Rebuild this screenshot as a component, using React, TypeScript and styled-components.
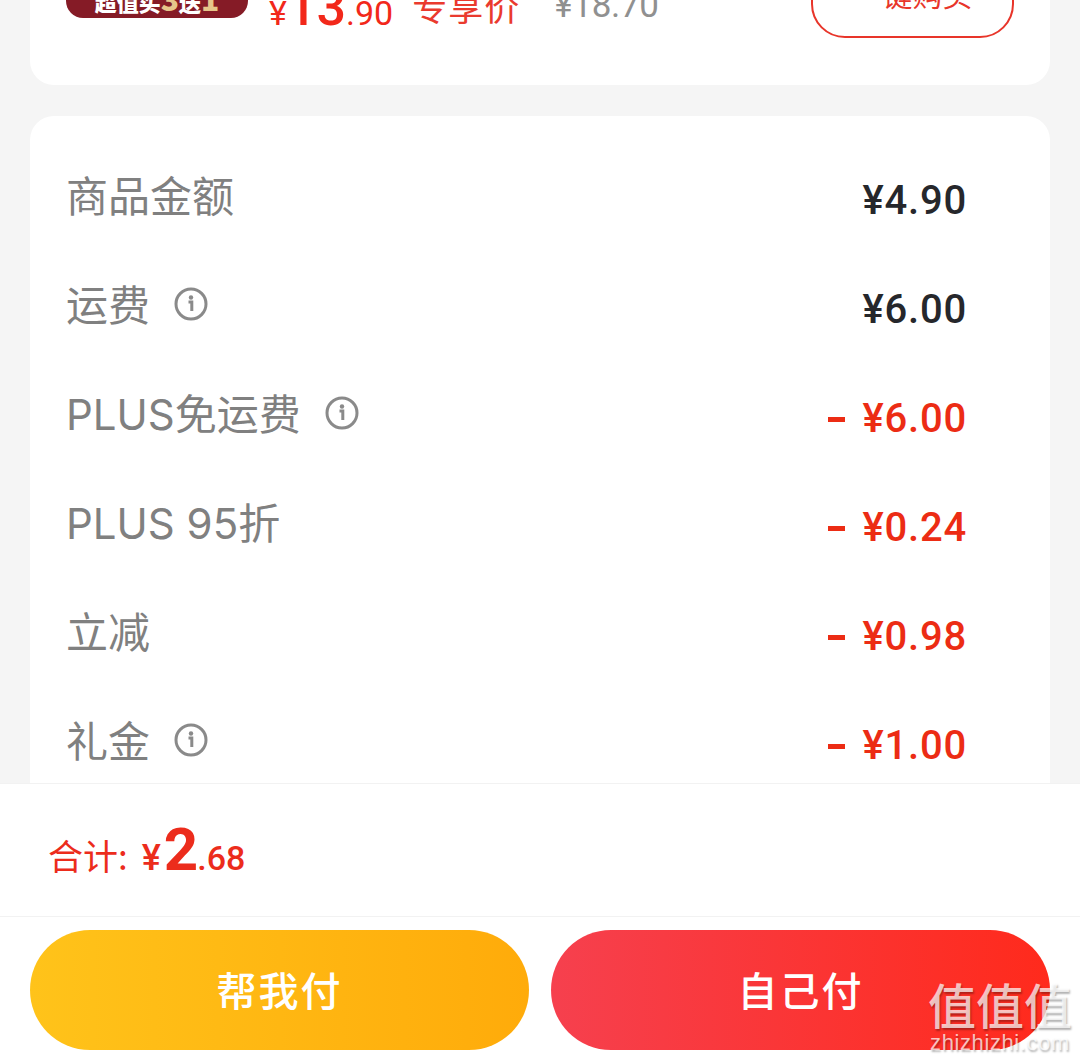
import React from "react";
import styled, { createGlobalStyle } from "styled-components";

const cjk = `"Noto Sans CJK SC", "Noto Sans", sans-serif`;
const num = `Roboto, "Noto Sans CJK SC", sans-serif`;

const Global = createGlobalStyle`
  html, body { margin: 0; padding: 0; background: #f5f5f5; }
  * { box-sizing: border-box; }
`;

const Page = styled.div`
  position: relative;
  width: 1080px;
  height: 1062px;
  display: flex;
  flex-direction: column;
  overflow: hidden;
  background: #f5f5f5;
  font-family: ${cjk};
`;

const Scroll = styled.div`
  flex: 1;
  min-height: 0;
  overflow: hidden;
  padding: 0 30px;
  display: flex;
  flex-direction: column;
  gap: 31px;
`;

const OfferCard = styled.section`
  flex: none;
  height: 85px;
  background: #fff;
  border-radius: 0 0 24px 24px;
  padding: 0 36px 47px 36px;
  display: flex;
  align-items: flex-end;
  overflow: hidden;
`;

const Banner = styled.div`
  flex: none;
  width: 182px;
  height: 50px;
  margin-bottom: 20px;
  border-radius: 0 0 17px 17px;
  background: #851b26;
  color: #fff;
  font-size: 22px;
  font-weight: 900;
  line-height: 60px;
  text-align: center;
  white-space: nowrap;
`;

const GoldNum = styled.span`
  color: #e6c58a;
  font-size: 30px;
`;

const Price = styled.div`
  flex: none;
  margin: 0 0 -5px 21px;
  color: #f2281a;
  font-family: ${num};
  font-size: 34px;
  line-height: 60px;
  white-space: nowrap;
`;

const PriceBig = styled.span`
  font-size: 52px;
  font-weight: 500;
`;

const Exclusive = styled.div`
  flex: none;
  margin: 0 0 7px 19px;
  color: #ea3a2e;
  font-size: 35px;
  line-height: 50px;
  letter-spacing: 1px;
  white-space: nowrap;
`;

const OldPrice = styled.div`
  flex: none;
  margin: 0 0 7px 34px;
  color: #909090;
  font-family: ${num};
  font-size: 35px;
  letter-spacing: -0.3px;
  line-height: 50px;
  white-space: nowrap;
`;

const BuyButton = styled.div`
  flex: none;
  margin-left: auto;
  width: 203px;
  height: 76px;
  border: 2px solid #e8352a;
  border-radius: 34px;
  color: #e8352a;
  font-size: 30px;
  line-height: 58px;
  text-align: center;
  white-space: nowrap;
`;

const BreakdownCard = styled.section`
  flex: none;
  background: #fff;
  border-radius: 24px 24px 0 0;
  padding: 27px 83px 0 36px;
`;

const Row = styled.div`
  height: 109px;
  display: flex;
  align-items: center;
  justify-content: space-between;
`;

const Label = styled.div`
  display: flex;
  align-items: center;
  gap: 24px;
  margin-top: -2px;
  color: #808080;
  font-family: Inter, ${cjk};
  font-size: 42px;
  line-height: 60px;
  white-space: nowrap;
`;

const InfoIcon = styled.svg`
  flex: none;
  margin-top: -3px;
`;

const Value = styled.div<{ $discount?: boolean }>`
  display: flex;
  align-items: center;
  margin-top: 7px;
  color: ${(p) => (p.$discount ? "#ec2c14" : "#26272b")};
  font-family: ${num};
  font-size: 40px;
  font-weight: 500;
  letter-spacing: 0.8px;
  line-height: 50px;
  white-space: nowrap;
`;

const Minus = styled.span`
  flex: none;
  width: 17px;
  height: 5px;
  margin-right: 17px;
  background: currentColor;
`;

const Footer = styled.footer`
  flex: none;
  height: 279px;
  background: #fff;
  border-top: 1px solid #f2f2f2;
`;

const TotalBar = styled.div`
  height: 133px;
  padding: 0 0 0 48px;
  display: flex;
  align-items: baseline;
  border-bottom: 1px solid #f2f2f2;
  color: #ec2c1c;
  line-height: 132px;
  white-space: nowrap;
`;

const TotalLabel = styled.span`
  font-size: 35px;
  margin-right: 14px;
`;

const Yen = styled.span`
  font-family: ${num};
  font-size: 36px;
  font-weight: 500;
  margin-right: 3px;
`;

const TotalBig = styled.span`
  font-family: ${num};
  font-size: 60px;
  font-weight: 700;
  margin-right: -1px;
`;

const TotalSmall = styled.span`
  font-family: ${num};
  font-size: 34px;
  font-weight: 500;
`;

const Actions = styled.div`
  padding: 13px 30px 0;
  display: flex;
  gap: 22px;
`;

const PayButton = styled.div<{ $tone: "gold" | "red" }>`
  flex: 1;
  height: 120px;
  border-radius: 60px;
  background: ${(p) =>
    p.$tone === "gold"
      ? "linear-gradient(90deg, #ffc31a, #ffab0a)"
      : "linear-gradient(90deg, #f6404e, #ff2a1c)"};
  color: #fff;
  font-size: 40px;
  font-weight: 500;
  letter-spacing: 2px;
  line-height: 118px;
  text-align: center;
`;

const Watermark = styled.div`
  position: absolute;
  left: 927px;
  top: 974px;
  width: 146px;
  color: rgba(255, 255, 255, 0.72);
  text-shadow: 1px 2px 2px rgba(0, 0, 0, 0.3);
  text-align: center;
  white-space: nowrap;
`;

const WatermarkMark = styled.div`
  font-size: 48px;
  font-weight: 500;
  line-height: 58px;
`;

const WatermarkUrl = styled.div`
  font-family: "Liberation Sans", sans-serif;
  font-size: 22px;
  line-height: 22px;
  letter-spacing: 0.6px;
`;

const Info = () => (
  <InfoIcon width="34" height="34" viewBox="0 0 34 34" fill="none" aria-hidden="true">
    <circle cx="17" cy="17" r="15" stroke="#8a8a8a" strokeWidth="3" />
    <circle cx="17" cy="10.5" r="2.2" fill="#8a8a8a" />
    <path d="M14.5 15h3.3v9" stroke="#8a8a8a" strokeWidth="3" />
  </InfoIcon>
);

const rows = [
  { label: "商品金额", value: "¥4.90" },
  { label: "运费", value: "¥6.00", info: true },
  { label: "PLUS免运费", value: "¥6.00", info: true, discount: true },
  { label: "PLUS 95折", value: "¥0.24", discount: true },
  { label: "立减", value: "¥0.98", discount: true },
  { label: "礼金", value: "¥1.00", info: true, discount: true },
];

export default function App() {
  return (
    <Page>
      <Global />
      <Scroll>
        <OfferCard>
          <Banner>
            超值买<GoldNum>3</GoldNum>送<GoldNum>1</GoldNum>
          </Banner>
          <Price>
            ¥<PriceBig>13</PriceBig>.90
          </Price>
          <Exclusive>专享价</Exclusive>
          <OldPrice>¥18.70</OldPrice>
          <BuyButton>一键购买</BuyButton>
        </OfferCard>
        <BreakdownCard>
          {rows.map((r) => (
            <Row key={r.label}>
              <Label>
                {r.label}
                {r.info && <Info />}
              </Label>
              <Value $discount={r.discount}>
                {r.discount && <Minus />}
                {r.value}
              </Value>
            </Row>
          ))}
        </BreakdownCard>
      </Scroll>
      <Footer>
        <TotalBar>
          <TotalLabel>合计:</TotalLabel>
          <Yen>¥</Yen>
          <TotalBig>2</TotalBig>
          <TotalSmall>.68</TotalSmall>
        </TotalBar>
        <Actions>
          <PayButton $tone="gold">帮我付</PayButton>
          <PayButton $tone="red">自己付</PayButton>
        </Actions>
      </Footer>
      <Watermark>
        <WatermarkMark>值值值</WatermarkMark>
        <WatermarkUrl>zhizhizhi.com</WatermarkUrl>
      </Watermark>
    </Page>
  );
}
